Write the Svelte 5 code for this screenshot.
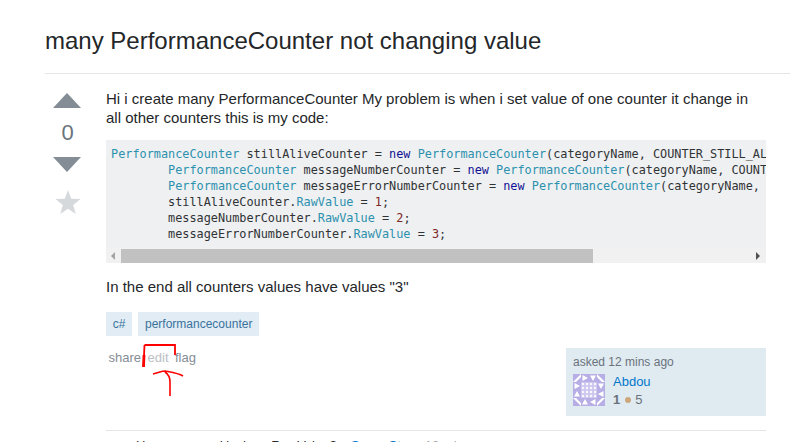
<script>
  // identicon: corner and edge tiles around a lattice centre, 8px each
  const corner = 'M0 0h8L0 8z M8 8V3L3 8z'
  const edge = 'M0 0h8v8H0z M1.500 1L7 4L1.500 7z'
  const tiles = [
    [0, 0, 0, corner],
    [8, 0, 0, edge],
    [16, 0, 90, edge],
    [24, 0, 90, corner],
    [24, 8, 90, edge],
    [24, 16, 180, edge],
    [24, 24, 180, corner],
    [16, 24, 180, edge],
    [8, 24, 270, edge],
    [0, 24, 270, corner],
    [0, 16, 270, edge],
    [0, 8, 0, edge]
  ]
  const centre = [8, 12, 16, 20]
</script>

<div class="page">
  <h1>many PerformanceCounter not changing value</h1>
  <div class="question">
    <div class="votes">
      <div class="up"></div>
      <div class="count">0</div>
      <div class="down"></div>
      <svg class="star" width="26" height="24" viewBox="0 0 26 24">
        <path d="M13 0l3.2 8.8 9.3.3-7.3 5.8 2.6 9.1L13 18.700l-7.800 5.300 2.600-9.100L.5 9.100l9.300-.3z" />
      </svg>
    </div>
    <div class="post">
      <p class="intro">Hi i create many PerformanceCounter My problem is when i set value of one counter it change in all other counters this is my code:</p>
      <div class="code">
        <pre><span class="typ">PerformanceCounter</span> stillAliveCounter = <span class="kwd">new</span> <span class="typ">PerformanceCounter</span>(categoryName, COUNTER_STILL_ALIVE, <span class="kwd">false</span>);
        <span class="typ">PerformanceCounter</span> messageNumberCounter = <span class="kwd">new</span> <span class="typ">PerformanceCounter</span>(categoryName, COUNTER_NUMBER, <span class="kwd">false</span>);
        <span class="typ">PerformanceCounter</span> messageErrorNumberCounter = <span class="kwd">new</span> <span class="typ">PerformanceCounter</span>(categoryName, COUNTER_ERROR, <span class="kwd">false</span>);
        stillAliveCounter.<span class="typ">RawValue</span> = <span class="lit">1</span>;
        messageNumberCounter.<span class="typ">RawValue</span> = <span class="lit">2</span>;
        messageErrorNumberCounter.<span class="typ">RawValue</span> = <span class="lit">3</span>;</pre>
        <div class="scrollbar">
          <span class="arrow left"></span>
          <div class="track"><div class="thumb"></div></div>
          <span class="arrow right"></span>
        </div>
      </div>
      <p class="end">In the end all counters values have values "3"</p>
      <div class="tags">
        <span class="tag">c#</span>
        <span class="tag">performancecounter</span>
      </div>
      <div class="footer">
        <div class="menu">
          <span>share</span>
          <span class="edit">edit</span>
          <span>flag</span>
          <svg class="scribble" width="50" height="56" viewBox="0 0 50 56" fill="none" stroke="#f00">
            <path d="M4.500 3H35V13" stroke-width="1.800" />
            <path d="M4.500 3C4 12 4 18 3.500 25" stroke-width="1.800" />
            <path d="M4 13L3.500 25" stroke-width="2.800" />
            <path d="M13 32C18 31 22 29 25 29C30 30 38 31 43 34M25 30C28 32 30 35 30 40V54" stroke-width="1.600" />
          </svg>
        </div>
        <div class="owner">
          <div class="asked">asked 12 mins ago</div>
          <div class="user">
            <svg class="avatar" width="32" height="32" viewBox="0 0 32 32">
              <rect width="32" height="32" fill="#fff" />
              {#each tiles as [x, y, r, d]}
                <path {d} transform="translate({x} {y}) rotate({r} 4 4)" fill="#b8aee6" fill-rule="evenodd" />
              {/each}
              {#each centre as x}
                {#each centre as y}
                  <path d="M0 0h4v4H0z M2 .6L.6 2L2 3.400L3.400 2z" transform="translate({x} {y})" fill="#cdc6ef" fill-rule="evenodd" />
                {/each}
              {/each}
            </svg>
            <div class="details">
              <div class="name">Abdou</div>
              <div class="rep"><b>1</b><i></i><span>5</span></div>
            </div>
          </div>
        </div>
      </div>
      <div class="comments">
        <div class="comment">Have you used lock on RawValue? <span class="who">– Some Stacy</span> <span class="when">10 mins ago</span></div>
      </div>
    </div>
  </div>
</div>

<style>
  :global(html), :global(body) {
    margin: 0;
    overflow: hidden;
    background: #fff;
  }

  .page {
    box-sizing: border-box;
    height: 442px;
    overflow: hidden;
    padding: 27px 0 0 45px;
    font-family: "Liberation Sans", Arial, sans-serif;
    color: #242729;
  }

  h1 {
    margin: 0;
    height: 46px;
    font-size: 24px;
    font-weight: 400;
    line-height: 28px;
    border-bottom: 1px solid #e4e6e8;
  }

  .question {
    display: flex;
    padding-top: 15px;
  }

  .votes {
    width: 61px;
    flex: none;
    display: flex;
    flex-direction: column;
    padding-left: 8px;
    box-sizing: border-box;
  }

  .up, .down {
    width: 0;
    height: 0;
    border-left: 14.500px solid transparent;
    border-right: 14.500px solid transparent;
  }

  .up {
    margin-top: 4px;
    border-bottom: 15px solid #848d95;
  }

  .down {
    border-top: 15px solid #848d95;
  }

  .count {
    width: 29px;
    height: 49px;
    line-height: 50px;
    text-align: center;
    font-size: 22px;
    color: #6a737c;
  }

  .star {
    margin: 18px 0 0 2px;
    fill: #d6d9dc;
  }

  .post {
    width: 660px;
    flex: none;
  }

  p {
    margin: 0;
    font-size: 15px;
    line-height: 19px;
  }

  .intro {
    margin-bottom: 13px;
  }

  .code {
    background: #eff0f1;
    height: 123px;
    overflow: hidden;
  }

  pre {
    margin: 0;
    padding: 6px 5px 5px;
    height: 97px;
    overflow: hidden;
    box-sizing: content-box;
    font-family: "DejaVu Sans Mono", monospace;
    font-size: 11.850px;
    line-height: 16px;
    color: #303336;
  }

  .typ { color: #2b91af; }
  .kwd { color: #101094; }
  .lit { color: #7d2727; }

  .scrollbar {
    display: flex;
    align-items: center;
    height: 15px;
    background: #f1f1f1;
  }

  .track {
    flex: 1;
    height: 14px;
  }

  .thumb {
    width: 75%;
    height: 100%;
    background: #c1c1c1;
  }

  .arrow {
    flex: none;
    width: 0;
    height: 0;
    border-top: 4px solid transparent;
    border-bottom: 4px solid transparent;
  }

  .arrow.left {
    margin: 0 6px 0 5px;
    border-right: 4px solid #a3a3a3;
  }

  .arrow.right {
    margin: 0 6px 0 6px;
    border-left: 4px solid #505050;
  }

  .end {
    margin: 14px 0 16px;
  }

  .tags {
    display: flex;
    gap: 6px;
  }

  .tag {
    height: 24px;
    line-height: 24px;
    padding: 0 7px;
    background: #e1ecf4;
    color: #39739d;
    font-size: 12px;
  }

  .tag:first-child {
    width: 26px;
    padding: 0;
    text-align: center;
  }

  .footer {
    display: flex;
    justify-content: space-between;
    margin-top: 12px;
  }

  .menu {
    position: relative;
    display: flex;
    gap: 6.500px;
    height: 20px;
    padding: 2px 0 0 2.500px;
    font-size: 13px;
    line-height: 16px;
    color: #848d95;
  }

  .menu .edit {
    color: #bbc0c4;
  }

  .scribble {
    position: absolute;
    left: 34px;
    top: -6px;
  }

  .owner {
    box-sizing: border-box;
    width: 200px;
    height: 68px;
    padding: 7px;
    background: #e0eaf1;
    font-size: 12px;
  }

  .asked {
    line-height: 15px;
    color: #6a737c;
  }

  .user {
    display: flex;
    gap: 8px;
    margin-top: 4px;
  }

  .avatar {
    display: block;
    flex: none;
  }

  .name {
    font-size: 13px;
    line-height: 16px;
    color: #07c;
  }

  .rep {
    display: flex;
    align-items: center;
    margin-top: 2px;
    font-size: 13px;
    line-height: 16px;
    color: #6a737c;
  }

  .rep i {
    width: 6px;
    height: 6px;
    margin: 0 4px 0 5px;
    border-radius: 50%;
    background: #cda67e;
  }

  .comments {
    margin-top: 14px;
    border-top: 1px solid #e4e6e8;
    padding: 6px 0 0 30px;
    font-size: 13px;
    line-height: 17px;
  }

  .who { color: #07c; }
  .when { color: #9fa6ad; }
</style>
